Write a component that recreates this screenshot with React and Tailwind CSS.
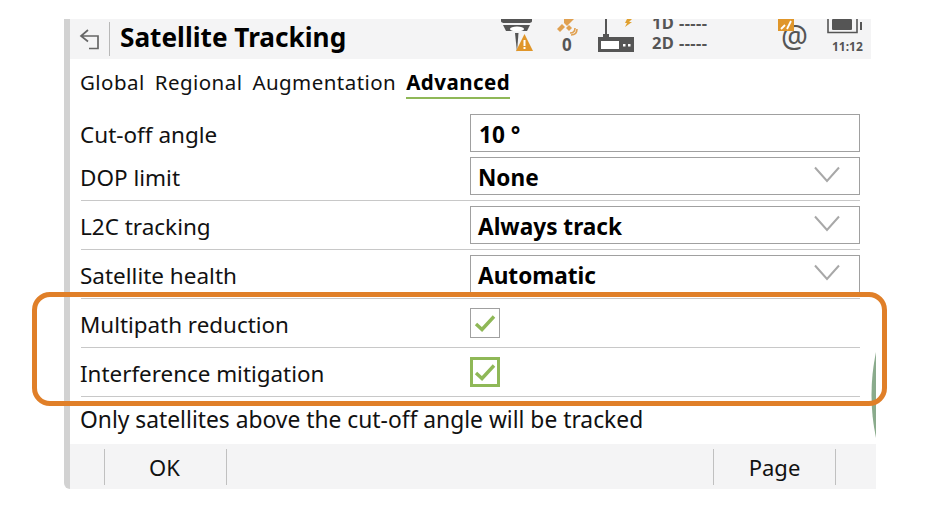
const font = { fontFamily: '"Noto Sans", "Open Sans", sans-serif' };

function Chevron() {
  return (
    <svg width="26" height="17" viewBox="0 0 26 17" className="mr-[19px] mb-[3px]" fill="none">
      <path d="M1 1.5 L13 15 L25 1.5" stroke="#a8a8a8" strokeWidth="2" />
    </svg>
  );
}

function Check({ active }) {
  return (
    <div className={active ? 'w-[30px] h-[30px] border-[3px] border-[#8fb857] flex items-center justify-center' : 'w-[30px] h-[30px] border border-[#a0a0a0] flex items-center justify-center'}>
      <svg width="24" height="20" viewBox="0 0 24 20" fill="none">
        <path d="M3 11 L9 16.5 L21 3.5" stroke="#8fb857" strokeWidth="3.4" />
      </svg>
    </div>
  );
}

function Field({ label, value, select, divider }) {
  return (
    <div className={divider ? 'ml-[17px] w-[779px] h-[49px] flex border-b border-[#c8c8c8] pt-[5px]' : 'ml-[17px] w-[779px] h-[43px] flex pt-[5px]'}>
      <div className="w-[389px] -ml-[1px] mr-[1px] text-[22.5px] leading-[42px] text-[#111]">{label}</div>
      <div className="w-[390px] h-[38px] border border-[#a0a0a0] flex items-center justify-between">
        <span className={select ? 'ml-[7px] pt-[4px] text-[22.6px] font-bold text-black' : 'ml-[8px] pt-[4px] text-[22.6px] font-bold text-black'}>{value}</span>
        {select && <Chevron />}
      </div>
    </div>
  );
}

function CheckRow({ label, active }) {
  return (
    <div className="ml-[17px] w-[779px] h-[49px] flex items-center border-b border-[#c8c8c8]">
      <div className="w-[389px] -ml-[1px] mr-[1px] pt-[4px] text-[22.4px] text-[#111]">{label}</div>
      <Check active={active} />
    </div>
  );
}

function StatusIcons() {
  return (
    <div className="flex-1 relative h-full overflow-hidden text-[#555] font-bold">
      {/* rover */}
      <svg className="absolute left-[80px] top-0" width="38" height="34" viewBox="0 0 38 34">
        <path d="M1 0 H32 V2 Q32 4 28 4 H5 Q1 4 1 2 Z" fill="#555" />
        <path d="M3 6 H30 L27 12 H6 Z" fill="#555" />
        <ellipse cx="17" cy="10" rx="7" ry="2.5" fill="#fff" />
        <path d="M15 14 H18.5 L17 33 Z" fill="#555" />
        <path d="M24.5 15 L33 32 H16 Z" fill="#e0962a" />
        <rect x="23.5" y="21" width="2" height="6" fill="#fff" />
        <rect x="23.5" y="28" width="2" height="2" fill="#fff" />
      </svg>
      {/* satellite */}
      <svg className="absolute left-[137px] top-0" width="22" height="18" viewBox="0 0 22 18">
        <path d="M7 0 H17 L13 4 L10 7 L7 4 Z" fill="#e0a050" />
        <path d="M5 5 L8 8 L3 13 L0 10 Z" fill="#e0a050" />
        <path d="M9 9 L12 6 L15 9 L12 12 Z" fill="#e0a050" />
        <path d="M13 14 Q18 14 18 9 M14 16 Q20 16 20 10" fill="none" stroke="#e0a050" strokeWidth="1.6" />
      </svg>
      <span className="absolute left-[142px] top-[16px] text-[17px] leading-5">0</span>
      {/* radio */}
      <svg className="absolute left-[178px] top-0" width="38" height="33" viewBox="0 0 38 33">
        <rect x="7" y="0" width="2" height="17" fill="#555" />
        <rect x="5" y="15" width="6" height="3" fill="#555" />
        <rect x="0" y="18" width="36" height="15" fill="#555" />
        <rect x="3" y="22" width="18" height="8" fill="#fff" />
        <rect x="25" y="25" width="2.5" height="2.5" fill="#fff" />
        <rect x="30" y="25" width="2.5" height="2.5" fill="#fff" />
        <path d="M29 0 H34 L31 3 H34 L27 8 L29 4 H27 Z" fill="#e0a030" />
      </svg>
      <span className="absolute left-[232px] top-[14px] text-[16.5px] tracking-[0.4px] leading-5 whitespace-nowrap">2D -----</span>
      <span className="absolute left-[232px] top-[-6px] text-[16.5px] tracking-[0.4px] leading-5 whitespace-nowrap">1D -----</span>
      {/* mail */}
      <span className="absolute left-[361px] top-[-3px] text-[30px] leading-[40px] font-normal text-[#555]">@</span>
      <div className="absolute left-[358px] top-0 w-[16px] h-[12px] bg-[#e0962a] flex items-center justify-center">
        <svg width="14" height="10" viewBox="0 0 14 10"><path d="M2 9 L6 5 M8 9 L12 1" stroke="#fff" strokeWidth="1.8" /></svg>
      </div>
      {/* battery */}
      <svg className="absolute left-[407px] top-0" width="36" height="16" viewBox="0 0 36 16">
        <path d="M1 0 V13.5 H30 V0" fill="none" stroke="#555" strokeWidth="1.6" />
        <rect x="5" y="0" width="20" height="11" rx="1" fill="#555" />
        <rect x="33" y="3" width="2" height="8" fill="#555" />
      </svg>
      <span className="absolute left-[412px] top-[18px] text-[12px] leading-5 whitespace-nowrap">11:12</span>
    </div>
  );
}

export default function App() {
  return (
    <div className="relative w-[932px] h-[511px] bg-white overflow-hidden pt-[19px] pl-[64px]" style={font}>
      <div className="relative w-[812px] h-[470px] flex flex-col border-l-[6px] border-[#d2d2d2] rounded-bl-[6px] overflow-hidden">
        {/* header */}
        <div className="w-[801px] h-[40px] bg-[#f4f4f5] flex items-center">
          <div className="w-[40px] h-[34px] flex items-center justify-center border-r border-[#b8b8b8]">
            <svg width="21" height="21" viewBox="0 0 21 21" fill="none">
              <path d="M9 1 L2 7 L9 12.5 M2.5 7 H19 V19.5 H10" stroke="#666" strokeWidth="1.7" />
            </svg>
          </div>
          <div className="ml-[10px] w-[300px] pb-[5px] text-[26.2px] font-bold text-black leading-[34px] whitespace-nowrap">Satellite Tracking</div>
          <StatusIcons />
        </div>
        {/* tabs */}
        <div className="ml-[10px] mt-[7px] h-[34px] flex gap-[10px] text-[20.5px] tracking-[0.45px] text-[#111] leading-[32px]">
          <span>Global</span>
          <span>Regional</span>
          <span>Augmentation</span>
          <span className="font-bold text-black border-b-2 border-[#8fb857] h-[33px]">Advanced</span>
        </div>
        {/* form */}
        <div className="mt-[9px] flex flex-col">
          <div className="-ml-[6px]"><Field label="Cut-off angle" value="10 °" /></div>
          <div className="-ml-[6px]"><Field label="DOP limit" value="None" select divider /></div>
          <div className="-ml-[6px]"><Field label="L2C tracking" value="Always track" select divider /></div>
          <div className="-ml-[6px]"><Field label="Satellite health" value="Automatic" select divider /></div>
          <div className="-ml-[6px]"><CheckRow label="Multipath reduction" /></div>
          <div className="-ml-[6px]"><CheckRow label="Interference mitigation" active /></div>
        </div>
        <div className="ml-[10px] mt-[8px] text-[22.8px] leading-[30px] text-[#111]">Only satellites above the cut-off angle will be tracked</div>
        {/* footer */}
        <div className="absolute bottom-0 left-0 w-[806px] h-[45px] bg-[#f4f4f5] flex items-center text-[22px] text-[#111]">
          <div className="ml-[34px] w-[123px] h-[36px] pt-[2px] pr-[2px] border-x border-[#c0c0c0] flex items-center justify-center">OK</div>
          <div className="ml-[486px] w-[123px] h-[36px] pt-[2px] border-x border-[#c0c0c0] flex items-center justify-center">Page</div>
        </div>
        {/* green sliver */}
        <svg className="absolute left-[801px] top-[333px]" width="5" height="86" viewBox="0 0 5 86">
          <path d="M5 0 Q-4 43 5 86 Z" fill="#8aab8c" />
        </svg>
      </div>
      {/* annotation */}
      <div className="absolute left-[32px] top-[292px] w-[855px] h-[114px] border-[5px] border-[#e07f28] rounded-[18px]" />
    </div>
  );
}
